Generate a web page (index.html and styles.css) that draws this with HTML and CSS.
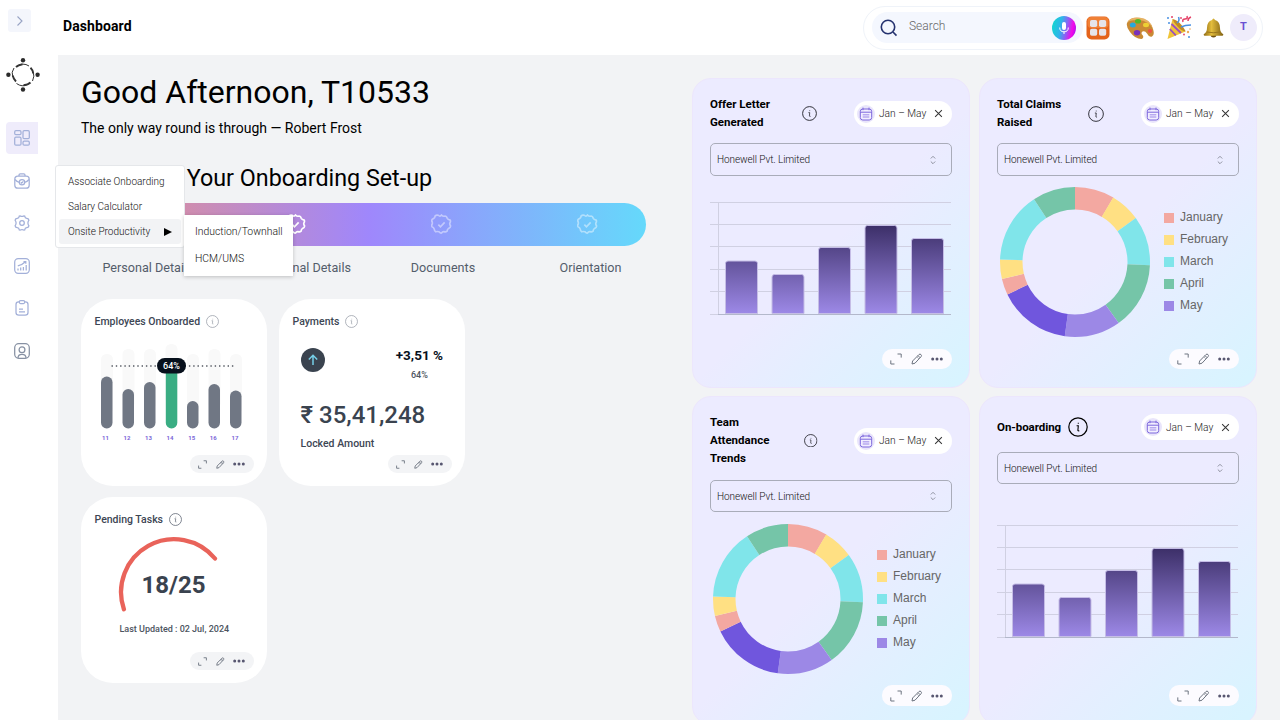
FILE: index.html
```html
<!DOCTYPE html>
<html lang="en">
<head>
<meta charset="utf-8">
<title>Dashboard</title>
<link rel="stylesheet" href="styles.css">
</head>
<body>
<svg class="defs" aria-hidden="true">
  <defs>
    <linearGradient id="bars" gradientUnits="userSpaceOnUse" x1="0" y1="24" x2="0" y2="111"><stop offset="0" stop-color="#3d3069"/><stop offset="1" stop-color="#9c88e6"/></linearGradient>
    <linearGradient id="mic" x1="0" y1=".4" x2="1" y2=".6"><stop offset="0" stop-color="#12d5d0"/><stop offset=".35" stop-color="#2fb4ea"/><stop offset=".6" stop-color="#8b62f5"/><stop offset=".85" stop-color="#f408e8"/><stop offset="1" stop-color="#b010f0"/></linearGradient>
    <linearGradient id="gold" x1="0" y1="0" x2="1" y2="0"><stop offset="0" stop-color="#8f6a14"/><stop offset=".4" stop-color="#e3bd3c"/><stop offset="1" stop-color="#806011"/></linearGradient>
  </defs>
  <symbol id="i-info" viewBox="0 0 20 20"><circle cx="10" cy="10" r="9.2"/><path stroke-width="1.1" d="M8.6 8.800h1.700l-.4 4.400q0 1 1.400.6M10.300 5.800v1"/></symbol>
  <symbol id="i-expand" viewBox="0 0 12 12"><path d="M7.5 1h3.7v3.6M.8 7.4V11h3.7"/></symbol>
  <symbol id="i-pencil" viewBox="0 0 12 12"><path d="M1 11l.6-3L8 1.500q1-.9 2 .1t.1 2L4 10.200zM7 2.600l2.200 2.200M6.500 4.500l1 1"/></symbol>
  <symbol id="i-dots" viewBox="0 0 12 4"><circle cx="1.700" cy="2" r="1.500"/><circle cx="6" cy="2" r="1.500"/><circle cx="10.300" cy="2" r="1.500"/></symbol>
  <symbol id="i-cal" viewBox="0 0 18 18"><circle cx="9" cy="9" r="9" fill="#e9e5fb"/><rect x="3.300" y="4" width="11.400" height="11" rx="2.500" fill="#f2efff" stroke="#7c66dc"/><path d="M3.300 7.200h11.400M6 2.600v2.600M12 2.600v2.600" stroke="#7c66dc" fill="none"/><path d="M5.700 9.800h6.600M5.700 12h6.600" stroke="#b8aaf0" stroke-width="1.600"/></symbol>
  <symbol id="i-x" viewBox="0 0 8 8"><path d="M1 1l6 6M7 1L1 7"/></symbol>
  <symbol id="i-sort" viewBox="0 0 6 10"><path d="M.8 3.500L3 1.300l2.200 2.200M.8 6.500L3 8.700l2.200-2.200"/></symbol>
  <symbol id="i-badge" viewBox="0 0 20 20"><path d="M10 1q1.700 1.700 3.400.9 1.500.2 2.100 2.200.6 1.200 2.700 1.700.8 1.200-.2 2.700-.5 1.500.7 3-.1 1.700-1.900 2.200-1.200.7-1.500 2.700-1.200 1.100-2.900.4-1.400-.2-2.400 1.300-1 .4-2.400-1.200-1.700-.5-3.100 0-1.400-.7-1.400-2.500-.4-1.500-2.100-2.200-.8-1.200.2-2.700.4-1.500-.6-3 .1-1.500 1.900-2.200 1.200-.7 1.500-2.600 1.100-1 2.900-.5Q8.600 2.800 10 1zM7 10.200l2 2 4-4.200"/></symbol>
  <symbol id="c-bars" viewBox="0 0 242 114">
    <path class="gridline" d="M0 .5h241M0 22.500h241M0 44.500h241M0 67.500h241M0 89.500h241M0 112.500h241M8.500 0v113"/><path class="axis" d="M8 112.500h233"/>
    <g class="bar">
      <path d="M15.500 111.500V61.500q0-2.500 2.500-2.500h27q2.500 0 2.500 2.500v50z"/>
      <path d="M62 111.500V75q0-2.500 2.500-2.500h27q2.500 0 2.500 2.500v36.500z"/>
      <path d="M108.500 111.500V48q0-2.500 2.500-2.500h27q2.500 0 2.500 2.500v63.500z"/>
      <path d="M155 111.500V26q0-2.500 2.500-2.500h27q2.500 0 2.500 2.500v85.500z"/>
      <path d="M201.500 111.500V39q0-2.500 2.500-2.500h27q2.500 0 2.500 2.500v72.500z"/>
    </g>
  </symbol>
  <symbol id="c-donut" viewBox="0 0 150 150">
    <g fill="none" stroke-width="22.500" transform="rotate(-90 75 75)">
      <circle cx="75" cy="75" r="63.750" pathLength="360" stroke="#f3a8a1" stroke-dasharray="30.800 400"/>
      <circle cx="75" cy="75" r="63.750" pathLength="360" stroke="#ffe083" stroke-dasharray="23.500 400" stroke-dashoffset="-30.600"/>
      <circle cx="75" cy="75" r="63.750" pathLength="360" stroke="#80e5ea" stroke-dasharray="38.400 400" stroke-dashoffset="-54.100"/>
      <circle cx="75" cy="75" r="63.750" pathLength="360" stroke="#75c5a8" stroke-dasharray="51.900 400" stroke-dashoffset="-92.500"/>
      <circle cx="75" cy="75" r="63.750" pathLength="360" stroke="#9c88e6" stroke-dasharray="43.500 400" stroke-dashoffset="-144.400"/>
      <circle cx="75" cy="75" r="63.750" pathLength="360" stroke="#7056dd" stroke-dasharray="56.400 400" stroke-dashoffset="-187.900"/>
      <circle cx="75" cy="75" r="63.750" pathLength="360" stroke="#f3a8a1" stroke-dasharray="12.600 400" stroke-dashoffset="-244.300"/>
      <circle cx="75" cy="75" r="63.750" pathLength="360" stroke="#ffe083" stroke-dasharray="15.100 400" stroke-dashoffset="-256.900"/>
      <circle cx="75" cy="75" r="63.750" pathLength="360" stroke="#80e5ea" stroke-dasharray="54.900 400" stroke-dashoffset="-272"/>
      <circle cx="75" cy="75" r="63.750" pathLength="360" stroke="#75c5a8" stroke-dasharray="33.100 400" stroke-dashoffset="-326.900"/>
    </g>
  </symbol>
</svg>

<aside class="rail">
  <button class="toggle"><svg width="7" height="12" viewBox="0 0 7 12"><path d="M1.500 1.500L6 6l-4.500 4.500"/></svg></button>
  <svg class="logo" width="34" height="34" viewBox="0 0 34 34">
    <g fill="#2b2b2b"><circle cx="17" cy="2.300" r="2.200"/><circle cx="17" cy="31.500" r="2.200"/><circle cx="2.400" cy="16.800" r="2.200"/><circle cx="31.600" cy="16.800" r="2.200"/></g>
    <g fill="none" stroke="#333" stroke-width="1"><path d="M8 10Q5 14 6.800 19"/><path d="M10.500 25.500Q16 29.500 22 26.500"/><path d="M26.500 23Q29 18 27 13.500"/><path d="M23 8Q17 4 10.500 8.500"/></g>
    <g fill="none" stroke="#333" stroke-width="1.900"><path d="M6.700 17.500Q7.500 21 10 23.500"/><path d="M17.500 27.300Q22 27 24.500 24.500"/><path d="M27.200 15.500Q27 12 24.500 9.700"/><path d="M16.500 6.200Q12 7 10 9"/></g>
  </svg>
  <nav class="nav">
    <a class="nav-item active"><svg viewBox="0 0 16 16"><rect x=".7" y=".7" width="6.300" height="4" rx="1.200"/><rect x=".7" y="7.200" width="6.300" height="8" rx="1.200"/><rect x="9" y=".7" width="6.300" height="8" rx="1.200"/><rect x="9" y="11.200" width="6.300" height="4" rx="1.200"/></svg></a>
    <a class="nav-item"><svg viewBox="0 0 16 16"><rect x=".8" y="3.200" width="14.400" height="12" rx="3"/><path d="M5 3V2Q5 .8 6.200 .8h3.600Q11 .8 11 2v1M1 6.500Q3 9 5.300 9.300M15 6.500Q13 9 10.700 9.300"/><circle cx="8" cy="9.200" r="2.700"/><path d="M6.800 9.200l.9.900 1.600-1.700"/></svg></a>
    <a class="nav-item"><svg viewBox="0 0 16 16"><path d="M6.300.9Q8 2 9.700.9l1 .2q.3 2 2 2.200l1.500.5.7 1.300Q13.900 6.600 13.900 8t1 2.900l-.7 1.300-1.500.5q-1.700.2-2 2.200l-1 .2Q8 14 6.300 15.100l-1-.2q-.3-2-2-2.200l-1.500-.5-.7-1.300Q2.100 9.400 2.100 8t-1-2.900l.7-1.300 1.500-.5q1.700-.2 2-2.200z"/><circle cx="8" cy="8" r="2.300"/></svg></a>
    <a class="nav-item"><svg viewBox="0 0 16 16"><rect x=".7" y=".7" width="14.600" height="14.600" rx="3.500"/><path d="M4 12.500v-2M6.700 12.500v-3M9.400 12.500V9M12.200 12.500V7M3.800 7.800Q8 7 11.500 3.700M9.500 3.500h2.300v2.200"/></svg></a>
    <a class="nav-item"><svg viewBox="0 0 16 16"><path d="M5.300 1.800H4.500Q2 1.800 2 4.500v8Q2 15.200 4.800 15.200h6.400Q14 15.200 14 12.500v-8Q14 1.800 11.500 1.800h-.8"/><rect x="5.300" y=".7" width="5.400" height="2.800" rx="1.200"/><path d="M5 9h4M5 11.800h6M5 9h.5"/></svg></a>
    <a class="nav-item grey"><svg viewBox="0 0 16 16"><rect x=".7" y=".7" width="14.600" height="14.600" rx="4"/><circle cx="8" cy="6.800" r="2.900"/><path d="M4 15q0-3.700 4-3.700t4 3.700"/></svg></a>
  </nav>
</aside>

<header class="topbar">
  <h1>Dashboard</h1>
  <div class="tools">
    <div class="search">
      <svg class="mag" width="18" height="18" viewBox="0 0 18 18"><circle cx="8" cy="8" r="6.700"/><path d="M13 13l3.500 3.600"/></svg>
      <span>Search</span>
      <svg class="mic" width="24" height="24" viewBox="0 0 24 24"><circle cx="12" cy="12" r="12" fill="url(#mic)"/><rect x="10" y="6" width="4" height="8" rx="2" fill="#fff"/><path d="M7.700 11.500q0 4.300 4.300 4.300t4.300-4.300M12 15.800V18" fill="none" stroke="#fff"/></svg>
    </div>
    <svg class="t-grid" width="24" height="24" viewBox="0 0 24 24"><rect x=".5" y=".5" width="23" height="23" rx="5" fill="#e4631b"/><rect x="1.500" y="1" width="21" height="11" rx="4" fill="#f08036"/><g fill="#e6e4ea"><rect x="4" y="4" width="7.200" height="7" rx="1.800"/><rect x="13" y="4" width="7.200" height="7" rx="1.800"/><rect x="4" y="12.800" width="7.200" height="7" rx="1.800"/><rect x="13" y="12.800" width="7.200" height="7" rx="1.800"/></g></svg>
    <svg class="t-pal" width="28" height="22" viewBox="0 0 28 22"><path d="M1 6Q4 0 13 1q11 1 14 11 2 6-1 7.500-3 1-5-3-2-3-4.500-2-2 1.500 0 3.500 2 3-1 4Q9 22 4 15 0 10 1 6z" fill="#c98a34"/><path d="M1 5.500Q4 0 13 .5q11 1 14 11-5-8-14-8.500Q4 2.500 1 5.500z" fill="#e6b263"/><ellipse cx="12" cy="4.300" rx="3" ry="2.300" fill="#53b72a"/><ellipse cx="6.800" cy="8" rx="3" ry="2.500" fill="#27a8dc"/><ellipse cx="20" cy="8" rx="3" ry="2.200" fill="#edd034"/><ellipse cx="24" cy="14" rx="2.200" ry="2" fill="#ec5345"/><ellipse cx="11" cy="15.800" rx="3.200" ry="2.700" fill="#7931b9"/></svg>
    <svg class="t-party" width="26" height="25" viewBox="0 0 26 25"><path d="M6.500 4l13 12.500L1.500 24z" fill="#f0c437"/><path d="M5.500 9l9.500 9M3.800 14l6 6.300" stroke="#9b4fc0" stroke-width="1.800"/><path d="M6.500 4q5 1 9 6t4 6.500q-4-.5-8-5T6.500 4z" fill="#c28a24"/><path d="M11 8q3-2 1.500-6M15 12q4-2 10-2" stroke="#4a90e2" stroke-width="1.500" fill="none"/><path d="M17 7q-1-3 2-3t2-3M22 6q0-3 3-4" stroke="#e54268" stroke-width="1.500" fill="none"/><g fill="#e54268"><circle cx="6" cy="2" r="1"/><circle cx="18" cy="19.500" r=".9"/><circle cx="15" cy="3" r=".9"/></g><g fill="#4a90e2"><circle cx="2" cy="3" r="1"/><circle cx="23" cy="22" r="1"/><circle cx="3" cy="8" r="1"/></g><g fill="#eda95b"><circle cx="22" cy="17" r="1.200"/><circle cx="24" cy="14" r=".8"/></g></svg>
    <svg class="t-bell" width="21" height="20" viewBox="0 0 21 20"><ellipse cx="10.500" cy="16.500" rx="3" ry="3" fill="#705112"/><path d="M9 2q1.500-3 3 0 5 1.500 5 8 0 4 3 6 .8 1-.5 1.700h-18Q.2 17 1 16q3-2 3-6 0-6.500 5-8z" fill="url(#gold)"/><path d="M4 14q6 1.500 13 0" stroke="#9b761d" fill="none"/></svg>
    <span class="avatar">T</span>
  </div>
</header>

<main class="main">
  <section class="left">
    <h2 class="greet">Good Afternoon, T10533</h2>
    <p class="quote">The only way round is through — Robert Frost</p>
    <h3 class="setup">Complete Your Onboarding Set-up</h3>
    <div class="steps">
      <svg><use href="#i-badge"/></svg><svg><use href="#i-badge"/></svg><svg class="todo"><use href="#i-badge"/></svg><svg class="todo"><use href="#i-badge"/></svg>
    </div>
    <div class="labels"><span>Personal Details</span><span>Professional Details</span><span>Documents</span><span>Orientation</span></div>
    <div class="minis">
      <article class="mini">
        <h4>Employees Onboarded <svg class="info faint"><use href="#i-info"/></svg></h4>
        <svg class="fill" width="186" height="110" viewBox="0 0 186 110">
          <g fill="#f9f9f9"><rect x="20" y="17" width="12" height="60" rx="5.500"/><rect x="41.500" y="12" width="12" height="60" rx="5.500"/><rect x="63" y="12" width="12" height="60" rx="5.500"/><rect x="84.500" y="7" width="12" height="60" rx="5.500"/><rect x="106" y="17" width="12" height="60" rx="5.500"/><rect x="127.500" y="12" width="12" height="60" rx="5.500"/><rect x="149" y="17" width="12" height="60" rx="5.500"/></g>
          <path d="M30.500 29H155" stroke="#555a63" stroke-width="1.400" stroke-dasharray="1.400 2.900"/>
          <g fill="#707784"><rect x="20" y="39.500" width="11.500" height="52" rx="5.700"/><rect x="41.500" y="52" width="11.500" height="39.500" rx="5.700"/><rect x="63" y="45" width="11.500" height="46.500" rx="5.700"/><rect x="106" y="64" width="11.500" height="27.500" rx="5.700"/><rect x="127.500" y="47" width="11.500" height="44.500" rx="5.700"/><rect x="149" y="53.500" width="11.500" height="38" rx="5.700"/></g>
          <rect x="84.800" y="24" width="11.500" height="67.500" rx="5.700" fill="#3aad83"/>
          <rect x="76" y="21" width="29" height="15.500" rx="7.700" fill="#07101c"/>
          <text class="tip" x="90.500" y="31.800">64%</text>
          <g class="days"><text x="24.500" y="103">11</text><text x="46" y="103">12</text><text x="67.500" y="103">13</text><text x="89" y="103">14</text><text x="110.700" y="103">15</text><text x="132.200" y="103">16</text><text x="154" y="103">17</text></g>
        </svg>
        <div class="acts"><svg class="a-exp"><use href="#i-expand"/></svg><svg class="a-pen"><use href="#i-pencil"/></svg><svg class="a-dots"><use href="#i-dots"/></svg></div>
      </article>
      <article class="mini">
        <h4>Payments <svg class="info faint"><use href="#i-info"/></svg></h4>
        <div class="pay">
          <svg width="24" height="24" viewBox="0 0 24 24"><circle cx="12" cy="12" r="12" fill="#3a434f"/><path d="M12 17V7.500M7.800 11.500L12 7.300l4.200 4.200" fill="none" stroke="#76cfe8" stroke-width="1.500"/></svg>
          <div class="delta"><b>+3,51 %</b><span>64%</span></div>
        </div>
        <p class="amount">₹ 35,41,248</p>
        <p class="locked">Locked Amount</p>
        <div class="acts"><svg class="a-exp"><use href="#i-expand"/></svg><svg class="a-pen"><use href="#i-pencil"/></svg><svg class="a-dots"><use href="#i-dots"/></svg></div>
      </article>
      <article class="mini">
        <h4>Pending Tasks <svg class="info"><use href="#i-info"/></svg></h4>
        <svg class="fill" width="186" height="110" viewBox="0 0 186 110">
          <path d="M42.900 74.300A53 53 0 0 1 134 23.500" fill="none" stroke="#e9635a" stroke-width="4.300" stroke-linecap="round"/>
          <text class="count" x="92.500" y="58">18/25</text>
          <text class="upd" x="93.300" y="96.500">Last Updated : 02 Jul, 2024</text>
        </svg>
        <div class="acts"><svg class="a-exp"><use href="#i-expand"/></svg><svg class="a-pen"><use href="#i-pencil"/></svg><svg class="a-dots"><use href="#i-dots"/></svg></div>
      </article>
    </div>
  </section>

  <section class="widgets">
    <article class="card">
      <div class="head"><h4>Offer Letter Generated</h4><svg class="ci s15"><use href="#i-info"/></svg><div class="range"><svg class="cal"><use href="#i-cal"/></svg>Jan – May<svg class="x"><use href="#i-x"/></svg></div></div>
      <div class="select">Honewell Pvt. Limited<svg><use href="#i-sort"/></svg></div>
      <svg class="bars"><use href="#c-bars"/></svg>
      <div class="acts"><svg class="a-exp"><use href="#i-expand"/></svg><svg class="a-pen"><use href="#i-pencil"/></svg><svg class="a-dots"><use href="#i-dots"/></svg></div>
    </article>
    <article class="card">
      <div class="head"><h4>Total Claims Raised</h4><svg class="ci s16"><use href="#i-info"/></svg><div class="range"><svg class="cal"><use href="#i-cal"/></svg>Jan – May<svg class="x"><use href="#i-x"/></svg></div></div>
      <div class="select">Honewell Pvt. Limited<svg><use href="#i-sort"/></svg></div>
      <div class="donut"><svg><use href="#c-donut"/></svg><ul><li class="jan">January</li><li class="feb">February</li><li class="mar">March</li><li class="apr">April</li><li class="may">May</li></ul></div>
      <div class="acts"><svg class="a-exp"><use href="#i-expand"/></svg><svg class="a-pen"><use href="#i-pencil"/></svg><svg class="a-dots"><use href="#i-dots"/></svg></div>
    </article>
    <article class="card lower tall">
      <div class="head"><h4>Team Attendance Trends</h4><svg class="ci s13"><use href="#i-info"/></svg><div class="range"><svg class="cal"><use href="#i-cal"/></svg>Jan – May<svg class="x"><use href="#i-x"/></svg></div></div>
      <div class="select">Honewell Pvt. Limited<svg><use href="#i-sort"/></svg></div>
      <div class="donut"><svg><use href="#c-donut"/></svg><ul><li class="jan">January</li><li class="feb">February</li><li class="mar">March</li><li class="apr">April</li><li class="may">May</li></ul></div>
      <div class="acts"><svg class="a-exp"><use href="#i-expand"/></svg><svg class="a-pen"><use href="#i-pencil"/></svg><svg class="a-dots"><use href="#i-dots"/></svg></div>
    </article>
    <article class="card lower">
      <div class="head"><h4 class="short">On-boarding</h4><svg class="ci s20"><use href="#i-info"/></svg><div class="range"><svg class="cal"><use href="#i-cal"/></svg>Jan – May<svg class="x"><use href="#i-x"/></svg></div></div>
      <div class="select">Honewell Pvt. Limited<svg><use href="#i-sort"/></svg></div>
      <svg class="bars"><use href="#c-bars"/></svg>
      <div class="acts"><svg class="a-exp"><use href="#i-expand"/></svg><svg class="a-pen"><use href="#i-pencil"/></svg><svg class="a-dots"><use href="#i-dots"/></svg></div>
    </article>
  </section>
</main>

<div class="menu"><a>Associate Onboarding</a><a>Salary Calculator</a><a class="open">Onsite Productivity<svg width="8" height="8" viewBox="0 0 8 8"><path d="M0 0l8 4-8 4z"/></svg></a></div>
<div class="submenu"><a>Induction/Townhall</a><a>HCM/UMS</a></div>
</body>
</html>
```
FILE: styles.css
```css
* { box-sizing: border-box; }
body { margin: 0; width: 1280px; height: 720px; overflow: hidden; display: grid; grid-template: 55px 665px / 58px 1222px; font-family: Roboto, "Liberation Sans", sans-serif; color: #000; background: #fff; }
h1, h2, h3, h4, p, ul { margin: 0; padding: 0; }
.defs { position: absolute; width: 0; height: 0; }

.rail { grid-row: 1 / 3; grid-column: 1; padding: 9px 0 0 6px; }
.toggle { display: flex; align-items: center; justify-content: center; margin-left: 2px; width: 23px; height: 23px; border: 0; border-radius: 3px; background: #f4f6fc; padding: 0; }
.toggle path { fill: none; stroke: #98a3c4; stroke-width: 1.1; }
.logo { display: block; margin: 26px 0 30px; }
.nav { display: flex; flex-direction: column; gap: 10.500px; }
.nav-item { width: 32px; height: 32px; display: flex; align-items: center; justify-content: center; border-radius: 4px 0 0 4px; padding-right: 1px; }
.nav-item.active { background: #efecfb; }
.nav-item svg { width: 16px; height: 16px; fill: none; stroke: #a3b0d9; stroke-width: 1.250; }
.nav-item.grey svg { stroke: #8791a3; }

.topbar { display: flex; align-items: center; justify-content: space-between; padding: 0 17px 0 5px; }
.topbar h1 { font-size: 14px; font-weight: 700; line-height: 20px; margin-top: -4px; letter-spacing: .1px; }
.tools { display: flex; align-items: center; width: 400px; height: 44px; border: 1px solid #eff3f9; border-radius: 22px; padding-left: 8px; }
.search { width: 211px; height: 31px; border-radius: 16px; background: #f4f7fe; display: flex; align-items: center; padding: 0 7px 0 8px; font-size: 12px; font-weight: 300; color: #666; }
.search span { margin: -3px 0 0 11px; }
.mag { fill: none; stroke: #26336f; stroke-width: 1.600; }
.mic { margin-left: auto; }
.t-grid { margin-left: 3px; }
.t-pal { margin-left: 16px; }
.t-party { margin-left: 12px; }
.t-bell { margin-left: 11px; }
.avatar { margin-left: 6px; width: 27px; height: 27px; border-radius: 50%; background: #efecfb; color: #6a50d3; font-size: 11px; font-weight: 700; display: flex; align-items: center; justify-content: center; padding-bottom: 2px; }

.main { background: #f2f3f5; display: flex; justify-content: space-between; padding: 0 23px; overflow: hidden; }
.left { width: 570px; padding-top: 17px; }
.greet { font-size: 32px; font-weight: 400; line-height: 40px; white-space: nowrap; }
.quote { font-size: 14px; line-height: 20px; margin-top: 6px; }
.setup { font-size: 23.300px; font-weight: 400; line-height: 30px; margin-top: 25px; }
.steps { margin-top: 10px; width: 565px; height: 43px; border-radius: 22px; background: linear-gradient(90deg, #ea9082, #9f87fc 51%, #65d9fb); display: flex; align-items: center; gap: 126px; padding-left: 58px; }
.steps svg { width: 21px; height: 21px; margin-right: -1px; fill: none; stroke: #fff; stroke-width: 1.600; }
.steps .todo { opacity: .45; }
.labels { display: grid; grid-template-columns: 134px 160px 136px 159px; margin-top: 13px; font-size: 12.600px; line-height: 18px; text-align: center; color: #545d6b; }
.minis { display: grid; grid-template-columns: 186px 186px; grid-template-rows: 187px 186px; gap: 11px 12px; margin-top: 22px; }
.mini { background: #fff; border-radius: 32px; display: flex; flex-direction: column; }
.mini h4 { display: flex; align-items: center; gap: 6px; padding: 15px 0 0 13.500px; height: 30px; font-size: 10.500px; font-weight: 500; color: #3d4654; }
.info { width: 13px; height: 13px; fill: none; stroke: #5d6572; stroke-width: 1.200; }
.info.faint { stroke: #9aa0aa; }
.fill { margin-top: 8px; display: block; }
.mini text { text-anchor: middle; }
.tip { fill: #fff; font-size: 9px; font-weight: 500; }
.days { fill: #7a66d8; font-size: 6px; font-weight: 700; }
.count { fill: #3a434f; font-size: 24px; font-weight: 700; }
.upd { fill: #4c5460; font-size: 9px; font-weight: 500; }
.pay { display: flex; justify-content: space-between; align-items: flex-start; padding: 18.500px 22px 0 21.500px; height: 54px; }
.delta { display: flex; flex-direction: column; align-items: center; color: #07101c; line-height: 17px; margin-top: -1px; }
.delta b { font-size: 13.500px; font-weight: 700; }
.delta span { font-size: 9px; font-weight: 500; color: #4c5460; line-height: 22px; }
.amount { margin: 16px 0 0 21.500px; font-size: 24px; font-weight: 500; line-height: 32px; color: #3a434f; white-space: nowrap; }
.locked { margin: 5px 0 0 21.500px; font-size: 10.500px; font-weight: 500; line-height: 16px; color: #3d4654; }

.acts { display: flex; align-items: center; align-self: flex-end; margin: auto 13px 13px 0; width: 64px; height: 18px; border-radius: 9px; background: #f3f4f6; padding: 0 9px 0 8px; justify-content: space-between; }
.a-exp, .a-pen { width: 9px; height: 9px; fill: none; stroke: #6d7480; stroke-width: 1.200; }
.a-dots { width: 12px; height: 4px; fill: #575670; }

.widgets { display: grid; grid-template-columns: 278px 278px; grid-template-rows: 310px 329px; gap: 8px 9px; padding-top: 23px; }
.card { border-radius: 19px; background: linear-gradient(135deg, #ecebff 0%, #ecebff 52%, #d8f4ff 97%); border: 1px solid #ece6fd; padding: 16px 17px 0; display: flex; flex-direction: column; }
.head { display: flex; align-items: center; min-height: 27px; }
.head h4 { font-size: 11.500px; font-weight: 700; line-height: 18px; width: 72px; flex: none; padding-right: 6px; }
.head .short { white-space: nowrap; padding: 0; letter-spacing: -.05px; }
.ci { fill: none; stroke: #2c2c34; flex: none; margin-top: 1px; }
.s15 { width: 15px; height: 15px; margin-left: 20px; stroke-width: 1.300; }
.s16 { width: 16px; height: 16px; margin-left: 19px; stroke-width: 1.200; }
.s13 { width: 13.500px; height: 13.500px; margin-left: 22px; stroke-width: 1.300; }
.s20 { width: 20px; height: 20px; margin-left: -1px; stroke: #000; stroke-width: 1.200; }
.range { margin: 1px 0 0 auto; width: 98px; height: 26px; border-radius: 13px; background: #fff; display: flex; align-items: center; padding-left: 3px; font-size: 10.200px; font-weight: 300; color: #222; white-space: nowrap; }
.cal { width: 18px; height: 18px; margin-right: 4px; flex: none; }
.x { width: 9px; height: 9px; margin: 0 9px 0 auto; fill: none; stroke: #333; stroke-width: .9; flex: none; }
.select { margin-top: 12px; height: 33px; border: 1px solid #a9acb9; border-radius: 5px; display: flex; align-items: center; justify-content: space-between; padding: 0 15px 0 6px; font-size: 10px; font-weight: 300; letter-spacing: -.08px; color: #111; flex: none; }
.select svg { width: 6px; height: 10px; fill: none; stroke: #848895; stroke-width: .9; }
.bars { width: 242px; height: 114px; margin-top: 26px; }
.gridline { stroke: #d0d0e2; fill: none; }
.axis { stroke: #b3b8cb; }
.bar path { fill: url(#bars); stroke: #c5bde6; stroke-width: 1; }
.donut { display: flex; align-items: center; margin: 11px 0 0 3.450px; }
.donut svg { width: 150px; height: 150px; }
.donut ul { list-style: none; margin: -2px 0 0 13.550px; font: 12px/22px "Liberation Sans", Arial, sans-serif; color: #666; }
.donut li { display: flex; align-items: center; gap: 6px; }
.donut li::before { content: ""; width: 10px; height: 10px; margin-top: 2px; background: #f3a8a1; }
.donut .feb::before { background: #ffe083; }
.donut .mar::before { background: #80e5ea; }
.donut .apr::before { background: #75c5a8; }
.donut .may::before { background: #9c88e6; }
.card .acts { width: 70px; height: 20px; border-radius: 10px; background: #fcfbff; margin: auto 0 18px; padding: 0 9px 0 8px; }
.card .a-exp, .card .a-pen { width: 12px; height: 12px; stroke-width: 1; }
.lower .select { height: 32px; }
.lower.tall .select { margin-top: 13px; }
.lower .bars { margin-top: 41px; }
.lower .donut { margin-top: 12px; }
.card.lower .acts { height: 21px; }

.menu, .submenu { position: absolute; background: #fff; font-size: 10px; font-weight: 300; color: #111; white-space: nowrap; }
.menu { left: 55px; top: 165px; width: 130px; height: 83px; border: 1px solid #e5e7ea; border-radius: 3px; padding: 3px; }
.menu a { display: flex; align-items: center; height: 25px; padding: 0 9px; border-radius: 3px; }
.menu .open { background: #f2f3f5; justify-content: space-between; }
.submenu { left: 184px; top: 215px; width: 109px; height: 61px; padding: 3px 11px; box-shadow: 0 1px 4px rgba(0, 0, 0, .22); font-size: 10.400px; }
.submenu a { display: flex; align-items: center; height: 27px; }
```
